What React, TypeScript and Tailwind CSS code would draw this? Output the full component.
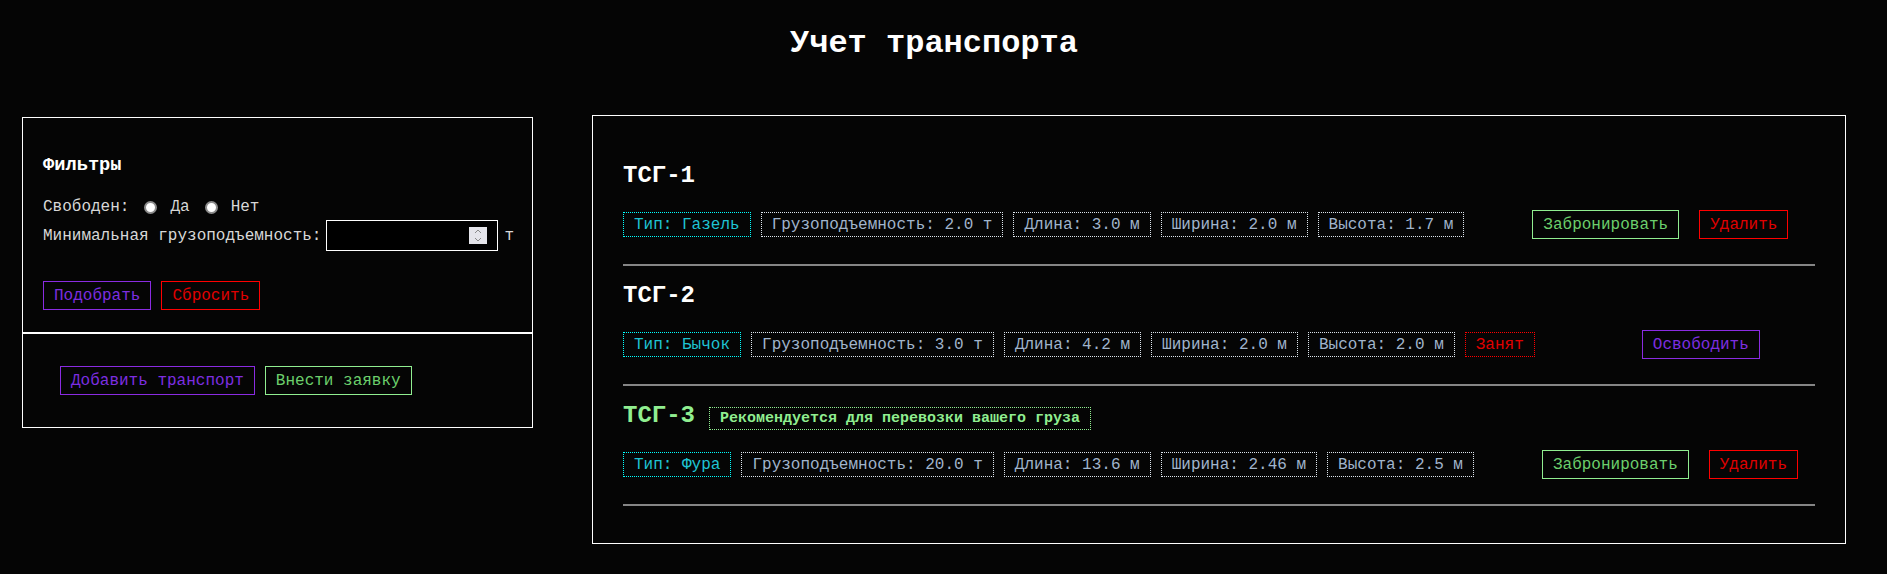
import React, { useState } from 'react';

interface Vehicle {
  id: number;
  name: string;
  type: string;
  capacity: string;
  length: string;
  width: string;
  height: string;
  busy: boolean;
  recommended: boolean;
}

const vehicles: Vehicle[] = [
  { id: 1, name: 'ТСГ-1', type: 'Газель', capacity: '2.0', length: '3.0', width: '2.0', height: '1.7', busy: false, recommended: false },
  { id: 2, name: 'ТСГ-2', type: 'Бычок', capacity: '3.0', length: '4.2', width: '2.0', height: '2.0', busy: true, recommended: false },
  { id: 3, name: 'ТСГ-3', type: 'Фура', capacity: '20.0', length: '13.6', width: '2.46', height: '2.5', busy: false, recommended: true },
];

const btn = 'h-[29px] px-[10px] border bg-transparent text-[16px] leading-[18px] whitespace-nowrap';
const purpleBtn = `${btn} border-[#8a2be2] text-[#7d2ee0]`;
const redBtn = `${btn} border-[#ff0000] text-[#e00000]`;
const greenBtn = `${btn} border-[#90ee90] text-[#6ccf6c]`;

const chip = 'h-[25px] px-[10px] flex items-center border border-dotted text-[16px] whitespace-nowrap';
const infoChip = `${chip} border-[#dce4ec] text-[#a0b4cc]`;

const radio =
  'ml-[15px] mr-[3px] w-[13px] h-[13px] appearance-none rounded-full bg-white border-[2px] border-[#8c8c8c] checked:border-[4px] checked:border-[#0075ff]';

const Filters: React.FC = () => {
  const [free, setFree] = useState<string>('');
  const [minCapacity, setMinCapacity] = useState('');

  return (
    <div className="border border-white pt-[36px] pb-[22px] pl-[20px] pr-[16px]">
      <h3 className="text-[18.72px] leading-[22px] font-bold text-white">Фильтры</h3>

      <div className="mt-[22px] h-[18px] flex items-center text-[16px] text-[#d8d8d8]">
        <span>Свободен:</span>
        <input
          type="radio"
          name="free"
          checked={free === 'yes'}
          onChange={() => setFree('yes')}
          className={radio}
        />
        <span className="ml-[10px]">Да</span>
        <input
          type="radio"
          name="free"
          checked={free === 'no'}
          onChange={() => setFree('no')}
          className={radio}
        />
        <span className="ml-[10px]">Нет</span>
      </div>

      <div className="mt-[4px] flex items-center whitespace-nowrap text-[16px] text-[#d8d8d8]">
        <span className="shrink-0">Минимальная грузоподъемность:</span>
        <div className="relative ml-[5px] shrink-0">
          <input
            type="number"
            value={minCapacity}
            onChange={(e) => setMinCapacity(e.target.value)}
            className="block w-[172px] h-[31px] border border-white bg-black text-white px-[4px] [appearance:textfield] [&::-webkit-inner-spin-button]:appearance-none [&::-webkit-outer-spin-button]:appearance-none"
          />
          {/* spinner */}
          <div className="absolute left-[143px] top-[7px] w-[18px] h-[17px] bg-[#e4e4ea] flex flex-col items-center justify-center gap-[3px] pointer-events-none">
            <svg width="8" height="5" viewBox="0 0 8 5">
              <path d="M1 4 L4 1 L7 4" stroke="#8a8a8a" strokeWidth="1" fill="none" />
            </svg>
            <svg width="8" height="5" viewBox="0 0 8 5">
              <path d="M1 1 L4 4 L7 1" stroke="#8a8a8a" strokeWidth="1" fill="none" />
            </svg>
          </div>
        </div>
        <span className="ml-[6px] shrink-0">т</span>
      </div>

      <div className="mt-[30px] flex gap-[10px]">
        <button className={purpleBtn}>Подобрать</button>
        <button className={redBtn} onClick={() => { setFree(''); setMinCapacity(''); }}>
          Сбросить
        </button>
      </div>
    </div>
  );
};

const VehicleItem: React.FC<{ v: Vehicle }> = ({ v }) => (
  <div className="pt-[16px]">
    <h2
      className={`text-[24px] leading-[28px] font-bold whitespace-nowrap ${
        v.recommended ? 'text-[#90ee90]' : 'text-white'
      }`}
    >
      {v.name}
      {v.recommended && (
        <span className="inline-block align-baseline ml-[14px] px-[10px] py-[2px] border border-dotted border-[#90ee90] text-[15px] leading-[17px] font-bold text-[#90ee90]">
          Рекомендуется для перевозки вашего груза
        </span>
      )}
    </h2>

    <div className="mt-[20px] h-[29px] flex items-center">
      <div className="flex items-center gap-[10px]">
        <span className={`${chip} border-[#00ffff] text-[#1fc3d3]`}>Тип: {v.type}</span>
        <span className={infoChip}>Грузоподъемность: {v.capacity} т</span>
        <span className={infoChip}>Длина: {v.length} м</span>
        <span className={infoChip}>Ширина: {v.width} м</span>
        <span className={infoChip}>Высота: {v.height} м</span>
        {v.busy && <span className={`${chip} border-[#ff0000] text-[#e00000]`}>Занят</span>}
      </div>

      {v.busy ? (
        <div className="ml-[107px] flex gap-[20px]">
          <button className={purpleBtn}>Освободить</button>
        </div>
      ) : (
        <div className="ml-[68px] flex gap-[20px]">
          <button className={greenBtn}>Забронировать</button>
          <button className={redBtn}>Удалить</button>
        </div>
      )}
    </div>

    <div className="mt-[25px] h-[2px] bg-[#858585]" />
  </div>
);

export default function App() {
  return (
    <div className="min-h-screen bg-[#050505] font-['Liberation_Mono',monospace] pb-[30px]">
      <h1 className="pt-[26px] pr-[19px] text-center text-[32px] leading-[36px] font-bold text-white">
        Учет транспорта
      </h1>

      <div className="mt-[53px] flex items-start pl-[22px] pr-[41px] gap-[59px]">
        <div className="w-[511px] shrink-0 mt-[2px]">
          <Filters />
          <div className="border border-white px-[37px] py-[32px] flex gap-[10px]">
            <button className={purpleBtn}>Добавить транспорт</button>
            <button className={greenBtn}>Внести заявку</button>
          </div>
        </div>

        <div className="flex-1 border border-white pt-[30px] pb-[37px] px-[30px]">
          {vehicles.map((v) => (
            <VehicleItem key={v.id} v={v} />
          ))}
        </div>
      </div>
    </div>
  );
}
